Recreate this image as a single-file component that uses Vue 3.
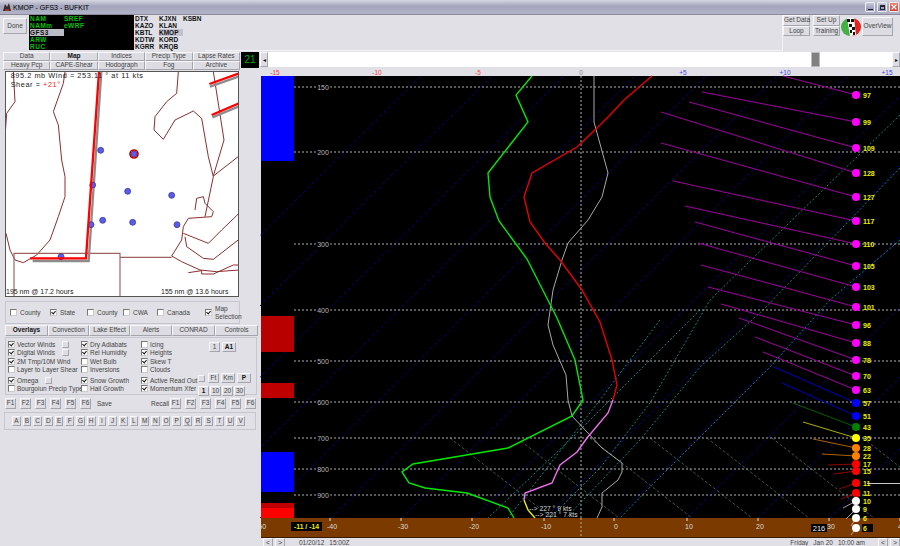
<template>
  <div class="app">
    <header class="titlebar">
      <svg class="app-icon" viewBox="0 0 10 10">
        <path d="M1 9 L3 2 L5 5 L7 1 L9 9 Z" fill="#3a2a2a" />
        <path d="M3 7 h4 v2 h-4 Z" fill="#a03030" />
      </svg>
      <span class="title-text">KMOP - GFS3 - BUFKIT</span>
      <div class="win-btns">
        <span class="win-btn"><i class="win-min"></i></span>
        <span class="win-btn"><i class="win-max"></i></span>
        <span class="win-btn win-close">
          <svg viewBox="0 0 10 10"><path d="M2 2 L8 8 M8 2 L2 8" stroke="#fff" stroke-width="1.6" /></svg>
        </span>
      </div>
    </header>

    <section class="toolbar">
      <button class="btn done">Done</button>
      <div class="models">
        <span v-for="m in models" :key="m" class="model" :class="{ sel: m === 'GFS3' }">{{ m }}</span>
      </div>
      <div class="stations">
        <span v-for="s in stations" :key="s" class="station" :class="{ sel: s === 'KMOP' }">{{ s }}</span>
      </div>
      <div class="panel-fill"></div>
      <div class="tool-right">
        <div class="stack">
          <button class="btn">Get Data</button>
          <button class="btn">Loop</button>
        </div>
        <div class="stack">
          <button class="btn">Set Up</button>
          <button class="btn">Training</button>
        </div>
        <svg class="logo" viewBox="0 0 20 20">
          <path d="M9 1 A9 9 0 0 0 9 19 Z" fill="#44b044" />
          <path d="M11 1 A9 9 0 0 1 11 19 Z" fill="#e82020" />
          <path d="M6 1 L13 1 L15 18 L9 19 Z" fill="#fff" />
          <path d="M6 2 h3 v3 h-3 Z M10 2 h3 v3 h-3 Z M8 7 h3 v3 h-3 Z M11 10 h3 v3 h-3 Z M9 13 h2 v3 h-2 Z M12 15 h2 v3 h-2 Z" fill="#111" />
        </svg>
        <button class="btn overview">OverView</button>
      </div>
    </section>

    <div class="main">
      <aside class="left">
        <div class="tabs-row">
          <div class="tabs-grid">
            <button v-for="t in topTabs" :key="t" class="btn tab" :class="{ bold: t === 'Map' }">{{ t }}</button>
          </div>
          <div class="counter">21</div>
        </div>

        <div class="map">
          <svg viewBox="18 6 696 672" width="232" height="224">
            <g fill="none" stroke="#8b2f2f" stroke-width="3">
              <path v-for="(d, i) in mapLines" :key="i" :d="d" />
            </g>
            <path d="M42 680 V550 H360 V680 M360 562 H515" fill="none" stroke="#a06060" stroke-width="3.5" />
            <g fill="none" stroke="#8c8c8c" stroke-width="7">
              <path d="M304 5 L266 573 H98" />
              <path d="M630 50 L717 19 M637 142 L717 109" />
            </g>
            <g fill="#5c5cec" stroke="#2c2c80" stroke-width="2">
              <circle v-for="(p, i) in mapDots" :key="i" :cx="p[0]" :cy="p[1]" r="9" />
            </g>
            <g fill="none" stroke="#ff0000" stroke-width="7">
              <path d="M297 5 L258 565 H90" />
              <path d="M628 42 L717 10 M635 135 L717 100" />
            </g>
            <circle cx="402" cy="252" r="12" fill="none" stroke="#c00000" stroke-width="5" />
            <g class="map-text">
              <text class="map-head" x="32" y="25">895.2 mb Wind =  253.11 ° at 11  kts</text>
              <text class="map-head" x="32" y="50">Shear = <tspan fill="#ff2020">+21°</tspan></text>
              <text class="map-foot" x="18" y="672">195 nm  @ 17.2 hours</text>
              <text class="map-foot" x="483" y="672">155 nm  @ 13.6 hours</text>
            </g>
          </svg>
        </div>

        <div class="group map-opts">
          <label v-for="o in mapOpts" :key="o.id" class="opt" :style="{ width: o.w + 'px' }">
            <span class="cb" :class="{ on: o.on }"></span>{{ o.label }}
          </label>
          <label class="opt opt-last">
            <span class="cb on"></span>
            <span>Map<br />Selection</span>
          </label>
        </div>

        <div class="sub-tabs">
          <button v-for="t in subTabs" :key="t" class="btn sub-tab" :class="{ bold: t === 'Overlays' }">{{ t }}</button>
        </div>

        <div class="group overlays">
          <div class="ov-grid">
            <div v-for="(col, c) in overlayCols" :key="c" class="ov-col">
              <label v-for="row in col" :key="row.label" class="ov-row" :class="{ gap: row.gap }">
                <span class="cb" :class="{ on: row.on }"></span>{{ row.label }}
                <span v-if="row.btn" class="btn mini"></span>
              </label>
            </div>
          </div>
          <div class="ov-side">
            <div class="side-top">
              <button class="btn sq">1</button>
              <button class="btn sq wide bold">A1</button>
            </div>
            <div class="side-units">
              <span class="btn mini"></span>
              <button class="btn sq">Ft</button>
              <button class="btn sq wide">Km</button>
              <button class="btn sq wide bold">P</button>
            </div>
            <div class="side-steps">
              <button v-for="n in ['1', '10', '20', '30']" :key="n" class="btn sq" :class="{ bold: n === '1' }">{{ n }}</button>
            </div>
          </div>
        </div>

        <div class="f-row">
          <button v-for="n in fKeys" :key="'s' + n" class="btn fkey">F{{ n }}</button>
          <span class="f-save">Save</span>
          <span class="f-recall">Recall</span>
          <button v-for="n in fKeys" :key="'r' + n" class="btn fkey">F{{ n }}</button>
        </div>

        <div class="group letters">
          <button v-for="l in letters" :key="l" class="btn letter">{{ l }}</button>
        </div>
      </aside>

      <main class="right">
        <div class="scroller">
          <button class="btn arrow">◂</button>
          <div class="track"><span class="thumb"></span></div>
          <button class="btn arrow">▸</button>
        </div>

        <svg class="chart" viewBox="260 68 640 470" width="640" height="470">
          <rect x="261" y="76" width="639" height="462" fill="#000" />

          <!-- background lines -->
          <g stroke="#000090" stroke-dasharray="3 3" fill="none">
            <line v-for="x in isotherms" :key="x" :x1="x" y1="518" :x2="x + 446" y2="76" />
          </g>
          <g stroke="#008888" stroke-dasharray="2 2" fill="none">
            <polyline v-for="(l, i) in tealLines" :key="i" :points="l" />
          </g>
          <g stroke="#2f5a50" stroke-dasharray="3 2" fill="none">
            <line v-for="x in dimLines" :key="x" :x1="x" y1="438" :x2="x + 102" y2="518" />
          </g>

          <!-- coloured blocks down the left edge -->
          <rect v-for="b in blocks" :key="b.y" x="261" :y="b.y" width="33" :height="b.h" :fill="b.c" />

          <!-- pressure levels -->
          <g stroke="#b0b0b0" stroke-dasharray="2 2">
            <line v-for="p in levels" :key="p.v" x1="294" :y1="p.y" x2="900" :y2="p.y" />
            <line x1="581" y1="76" x2="581" y2="538" />
          </g>
          <g class="lvl-text">
            <text v-for="p in levels" :key="p.v" x="323" :y="p.y + 3" text-anchor="middle" stroke="#000" stroke-width="3" paint-order="stroke">{{ p.v }}</text>
          </g>

          <!-- top axis -->
          <g class="axis-text">
            <text v-for="a in topAxis" :key="a.t" :x="a.x" y="75" :fill="a.c" text-anchor="middle">{{ a.t }}</text>
          </g>

          <!-- soundings -->
          <polyline :points="greyLine" fill="none" stroke="#a8a8a8" />
          <polyline :points="greenLine" fill="none" stroke="#00e800" stroke-width="1.4" />
          <polyline :points="redLine" fill="none" stroke="#e80000" stroke-width="1.4" />
          <polyline :points="pinkLine" fill="none" stroke="#f070f0" stroke-width="1.4" />
          <polyline points="524,500 528,510 535,518" fill="none" stroke="#f0f000" stroke-width="1.4" />

          <text class="kts" x="529" y="511">--&gt;  227 ° 9 kts</text>
          <text class="kts" x="535" y="517">--&gt;  221 ° 7 kts</text>

          <!-- temperature strip -->
          <rect x="261" y="518" width="639" height="19" fill="#7b3a00" />
          <line x1="261" y1="537.5" x2="900" y2="537.5" stroke="#3a1a00" />
          <line x1="581" y1="518" x2="581" y2="537" stroke="#b0b0b0" stroke-dasharray="2 2" />
          <g stroke="#ddd">
            <line v-for="a in bottomAxis" :key="a.t" :x1="a.x - 2" y1="518" :x2="a.x - 2" y2="521" />
          </g>
          <g class="axis-text bottom">
            <text v-for="a in bottomAxis" :key="a.t" :x="a.x" y="529" text-anchor="middle">{{ a.t }}</text>
          </g>
          <rect x="291" y="522" width="31" height="9" fill="#000" />
          <text class="box-yellow" x="306.5" y="529" text-anchor="middle">-11 / -14</text>
          <rect x="811" y="524" width="16" height="8" fill="#000" />
          <text class="box-white" x="819" y="531" text-anchor="middle">216</text>

          <!-- winds -->
          <line x1="867" y1="483.5" x2="900" y2="483.5" stroke="#c8c8c8" />
          <g v-for="w in winds" :key="w.y">
            <line :x1="w.x" :y1="w.ly" x2="856" :y2="w.y" :stroke="w.line" />
          </g>
          <g v-for="w in winds" :key="'d' + w.y">
            <circle cx="856" :cy="w.y" r="4" :fill="w.dot" />
            <rect v-if="w.y === 528" x="862" y="524" width="11" height="8" fill="#000" />
            <text class="wind-text" x="863" :y="w.y + 3">{{ w.v }}</text>
          </g>
        </svg>

        <footer class="status">
          <button class="btn nav">&lt;</button>
          <button class="btn nav">&gt;</button>
          <span class="stamp">01/20/12</span>
          <span class="stamp">15:00Z</span>
          <span class="when">Friday</span>
          <span class="stamp">Jan 20</span>
          <span class="stamp">10:00 am</span>
          <button class="btn nav end">&lt;</button>
          <button class="btn nav">&gt;</button>
        </footer>
      </main>
    </div>
  </div>
</template>

<script setup>
const models = ['NAM', 'NAMm', 'GFS3', 'ARW', 'RUC', 'SREF', 'eWRF']
const stations = ['DTX', 'KAZO', 'KBTL', 'KDTW', 'KGRR', 'KJXN', 'KLAN', 'KMOP', 'KORD', 'KRQB', 'KSBN']
const topTabs = ['Data', 'Map', 'Indices', 'Precip Type', 'Lapse Rates', 'Heavy Pcp', 'CAPE-Shear', 'Hodograph', 'Fog', 'Archive']
const subTabs = ['Overlays', 'Convection', 'Lake Effect', 'Alerts', 'CONRAD', 'Controls']
const fKeys = [1, 2, 3, 4, 5, 6]
const letters = 'ABCDEFGHIJKLMNOPQRSTUV'.split('')

const mapOpts = [
  { id: 1, label: 'County', w: 40, on: false },
  { id: 2, label: 'State', w: 37, on: true },
  { id: 3, label: 'County', w: 36, on: false },
  { id: 4, label: 'CWA', w: 34, on: false },
  { id: 5, label: 'Canada', w: 48, on: false }
]

const overlayCols = [
  [
    { label: 'Vector Winds', on: true, btn: true },
    { label: 'Digital Winds', on: true, btn: true },
    { label: '2M Tmp/10M Wnd', on: true },
    { label: 'Layer to Layer Shear', on: false },
    { label: 'Omega', on: true, btn: true, gap: true },
    { label: 'Bourgoiun Precip Type', on: false }
  ],
  [
    { label: 'Dry Adiabats', on: true },
    { label: 'Rel Humidity', on: true },
    { label: 'Wet Bulb', on: false },
    { label: 'Inversions', on: false },
    { label: 'Snow Growth', on: true, gap: true },
    { label: 'Hail Growth', on: false }
  ],
  [
    { label: 'Icing', on: false },
    { label: 'Heights', on: true },
    { label: 'Skew T', on: true },
    { label: 'Clouds', on: false },
    { label: 'Active Read Out', on: true, gap: true },
    { label: 'Momentum Xfer', on: true }
  ]
]

const mapLines = [
  'M195 5 L190 40 L160 125 L175 165 L185 270 L195 320 L195 380 L175 440 L150 510 L110 555 L70 578 L45 570 L30 540 L18 490',
  'M40 5 L45 95 L20 130 L15 200',
  'M535 5 L530 70 L500 95 L465 140 L462 180 L490 208 L525 150 L580 123 L605 145 L625 260 L640 320 L615 440',
  'M585 420 L590 385 L610 380 L615 400 L640 425 L635 440 L565 445 L550 470 L545 510 L515 558',
  'M640 5 L672 210 L640 318 L717 258',
  'M550 490 L625 520 L665 480 L717 430',
  'M555 500 L560 530 L610 565 L640 568 L717 508',
  'M515 558 L545 575 L600 600 L650 605 L717 600',
  'M565 608 L605 602 L605 612 L640 612 L700 585 L717 585',
  'M717 130 V155'
]
const mapDots = [[302, 241], [402, 252], [278, 345], [383, 364], [515, 376], [308, 451], [273, 464], [398, 457], [531, 464], [183, 560]]

const blocks = [
  { y: 76, h: 85, c: '#0000ff' },
  { y: 316, h: 36, c: '#b80000' },
  { y: 383, h: 15, c: '#c00000' },
  { y: 452, h: 40, c: '#0000ff' },
  { y: 503, h: 5, c: '#c00000' },
  { y: 508, h: 10, c: '#ff0000' }
]

const levels = [
  { v: 150, y: 87 }, { v: 200, y: 152 }, { v: 300, y: 244 }, { v: 400, y: 310 },
  { v: 500, y: 361 }, { v: 600, y: 402 }, { v: 700, y: 438 }, { v: 800, y: 469 }, { v: 900, y: 495 }
]

const isotherms = []
for (let k = -9; k <= 4; k++) isotherms.push(Math.round(616 + 71.2 * k))

const tealLines = [
  '900,115 710,300 650,403 600,468 550,518',
  '900,168 763,310 700,367 640,440 566,518',
  '900,240 830,300 770,367 652,485 620,518',
  '700,310 650,360 577,433 488,518',
  '660,320 600,400 508,518'
]
const dimLines = [450, 517, 590, 650, 707, 772, 863]

const topAxis = [
  { t: '-15', x: 275, c: '#f04040' }, { t: '-10', x: 377, c: '#f04040' }, { t: '-5', x: 478, c: '#f04040' },
  { t: '0', x: 581, c: '#888' }, { t: '+5', x: 683, c: '#4040f0' }, { t: '+10', x: 785, c: '#4040f0' }, { t: '+15', x: 887, c: '#4040f0' }
]
const bottomAxis = [
  { t: '-50', x: 261 }, { t: '-40', x: 332 }, { t: '-30', x: 403 }, { t: '-20', x: 474 }, { t: '-10', x: 546 },
  { t: '0', x: 616 }, { t: '10', x: 689 }, { t: '20', x: 760 }, { t: '30', x: 831 }, { t: '40', x: 902 }
]

const greenLine = '532,76 516,95 528,122 488,173 490,197 499,221 527,259 557,318 575,360 583,400 572,416 508,448 413,464 402,472 409,483 425,488 467,493 508,508 514,518'
const redLine = '652,76 624,100 610,115 597,128 577,147 532,173 524,197 530,222 545,243 560,260 582,290 600,322 612,360 617,385 613,400'
const pinkLine = '613,400 608,413 587,438 577,452 560,465 552,483 525,493 524,500'
const greyLine = '594,76 594,122 608,173 602,197 588,220 568,243 562,260 553,290 548,325 553,345 566,375 568,400 572,416 602,448 622,463 622,472 618,480 602,493 602,507 597,518'

const magenta = { dot: '#ff00ff', line: '#a000a0' }
const winds = [
  { v: 97, y: 95, x: 783, ly: 76, ...magenta },
  { v: 99, y: 122, x: 702, ly: 92, ...magenta },
  { v: 109, y: 148, x: 689, ly: 102, ...magenta },
  { v: 128, y: 173, x: 661, ly: 112, ...magenta },
  { v: 127, y: 197, x: 661, ly: 143, ...magenta },
  { v: 117, y: 221, x: 673, ly: 181, ...magenta },
  { v: 110, y: 244, x: 685, ly: 206, ...magenta },
  { v: 105, y: 266, x: 695, ly: 222, ...magenta },
  { v: 103, y: 287, x: 698, ly: 243, ...magenta },
  { v: 101, y: 307, x: 701, ly: 265, ...magenta },
  { v: 96, y: 325, x: 708, ly: 287, ...magenta },
  { v: 88, y: 343, x: 721, ly: 304, ...magenta },
  { v: 78, y: 360, x: 739, ly: 318, ...magenta },
  { v: 70, y: 376, x: 755, ly: 337, ...magenta },
  { v: 63, y: 390, x: 763, ly: 352, ...magenta },
  { v: 57, y: 403, x: 774, ly: 367, dot: '#0000ff', line: '#0000c0' },
  { v: 51, y: 416, x: 782, ly: 383, dot: '#0000ff', line: '#0000c0' },
  { v: 43, y: 427, x: 793, ly: 403, dot: '#008000', line: '#006000' },
  { v: 35, y: 438, x: 803, ly: 422, dot: '#ffff00', line: '#b0b000' },
  { v: 28, y: 448, x: 813, ly: 439, dot: '#ff8000', line: '#b06000' },
  { v: 22, y: 456, x: 822, ly: 454, dot: '#ff8000', line: '#b06000' },
  { v: 17, y: 464, x: 828, ly: 465, dot: '#ff0000', line: '#900000' },
  { v: 15, y: 471, x: 833, ly: 474, dot: '#ff0000', line: '#900000' },
  { v: 11, y: 483, x: 839, ly: 489, dot: '#ff0000', line: '#900000' },
  { v: 11, y: 493, x: 841, ly: 499, dot: '#ff0000', line: '#900000' },
  { v: 10, y: 501, x: 843, ly: 508, dot: '#ffffff', line: '#a0a0a0' },
  { v: 9, y: 509, x: 846, ly: 519, dot: '#ffffff', line: '#a0a0a0' },
  { v: 6, y: 518, x: 851, ly: 526, dot: '#ffffff', line: '#c0a090' },
  { v: 6, y: 528, x: 851, ly: 535, dot: '#ffffff', line: '#c0a090' }
]
</script>

<style>
body {
  margin: 0;
  background: #e0e0e6;
}
</style>

<style scoped>
.app {
  width: 900px;
  height: 546px;
  overflow: hidden;
  background: #e0e0e6;
  color: #444;
  font-family: "Liberation Sans", Arial, sans-serif;
  font-size: 6.5px;
}

button {
  font-family: inherit;
  color: inherit;
  padding: 0;
}

.btn {
  display: block;
  background: #dcdce2;
  border: 1px solid #a4a4ac;
  border-top-color: #f8f8fa;
  border-left-color: #f8f8fa;
  font-size: 6.5px;
  line-height: 1;
  box-sizing: border-box;
  white-space: nowrap;
}

.bold {
  font-weight: 700;
  color: #111;
}

.titlebar {
  height: 15px;
  display: flex;
  align-items: center;
  padding-left: 2px;
  box-sizing: border-box;
  background: linear-gradient(#d6d6e2, #a4a4bc 45%, #b2b2c8);
  border-bottom: 1px solid #8a8a98;
}

.app-icon {
  width: 10px;
  height: 10px;
  margin-right: 1px;
}

.title-text {
  color: #000;
  font-size: 7px;
}

.win-btns {
  margin-left: auto;
  display: flex;
  gap: 2px;
  margin-right: 1px;
}

.win-btn {
  width: 10px;
  height: 10px;
  border-radius: 1px;
  background: linear-gradient(#c8c8dc, #8c8cae);
  border: 1px solid #eee;
  box-sizing: border-box;
  display: flex;
  align-items: center;
  justify-content: center;
}

.win-min {
  width: 5px;
  height: 1px;
  background: #223;
  margin-top: 4px;
}

.win-max {
  width: 5px;
  height: 5px;
  border: 1px solid #223;
  border-top-width: 2px;
  box-sizing: border-box;
}

.win-close {
  background: linear-gradient(#e88070, #d04030);
}

.win-close svg {
  width: 100%;
  height: 100%;
}

.toolbar {
  height: 37px;
  display: flex;
  align-items: flex-start;
  padding-left: 3px;
  box-sizing: border-box;
}

.done {
  width: 24px;
  height: 16px;
  margin-top: 3px;
  margin-right: 2px;
}

.models {
  width: 105px;
  height: 35px;
  background: #000;
  display: grid;
  grid-auto-flow: column;
  grid-template-rows: repeat(5, 7px);
  grid-template-columns: 34px 1fr;
  padding-left: 1px;
  box-sizing: border-box;
  font-weight: 700;
  color: #00c000;
  line-height: 7px;
  letter-spacing: 0.5px;
}

.model.sel {
  background: #bcbcc6;
  color: #111;
}

.stations {
  margin-left: 1px;
  width: 70px;
  height: 35px;
  flex: none;
  display: grid;
  grid-auto-flow: column;
  grid-template-rows: repeat(5, 7px);
  grid-template-columns: 24px 24px 22px;
  color: #111;
  font-weight: 700;
  line-height: 7px;
}

.station.sel {
  background: #c2c2ce;
}

.panel-fill {
  flex: 1;
  height: 36px;
  border-right: 1px solid #f4f4f8;
  border-bottom: 1px solid #f4f4f8;
  box-sizing: border-box;
}

.tool-right {
  display: flex;
  align-items: flex-start;
  padding-right: 7px;
}

.stack {
  width: 27px;
  margin-right: 3px;
}

.stack .btn {
  width: 100%;
  height: 10.5px;
}

.logo {
  width: 20px;
  height: 20px;
  margin: 2px 1px 0 -2px;
}

.overview {
  width: 31px;
  height: 19px;
  margin-top: 2px;
}

.main {
  display: flex;
  height: 494px;
}

.left {
  width: 260px;
  flex: none;
  padding-left: 3px;
  box-sizing: border-box;
}

.tabs-row {
  display: flex;
  gap: 1px;
}

.tabs-grid {
  width: 237px;
  display: grid;
  grid-template-columns: repeat(5, 1fr);
  grid-auto-rows: 9px;
}

.tab {
  width: 100%;
  height: 100%;
}

.counter {
  width: 18px;
  height: 16px;
  background: #000;
  color: #00b000;
  font-size: 10px;
  line-height: 16px;
  text-align: center;
}

.map {
  margin: 1px 0 0 2px;
  width: 234px;
  height: 226px;
  background: #fff;
  border: 1px solid #555;
  box-sizing: border-box;
  overflow: hidden;
}

.map svg {
  display: block;
}

.map-text {
  fill: #222;
  white-space: pre;
}

.map-head {
  font-size: 22px;
  letter-spacing: 1.7px;
}

.map-foot {
  font-size: 21px;
}

.group {
  border: 1px solid #c6c6ce;
  box-sizing: border-box;
}

.map-opts {
  margin: 4px 0 0 2px;
  width: 235px;
  height: 23px;
  display: flex;
  align-items: center;
  padding-left: 4px;
}

.opt {
  display: flex;
  align-items: center;
  gap: 3px;
  flex: none;
}

.opt-last {
  line-height: 7.5px;
}

.cb {
  width: 7px;
  height: 7px;
  flex: none;
  background: #fff;
  border: 1px solid #777;
  border-right-color: #ccc;
  border-bottom-color: #ccc;
  box-sizing: border-box;
  position: relative;
}

.cb.on::after {
  content: "";
  position: absolute;
  left: 1px;
  top: 0;
  width: 2px;
  height: 3px;
  border: solid #111;
  border-width: 0 1px 1px 0;
  transform: rotate(40deg);
}

.sub-tabs {
  display: grid;
  grid-template-columns: 43px 41px 41px 42px 43px 43px;
  margin: 1px 0 0 2px;
  height: 11px;
}

.sub-tab {
  height: 100%;
  width: 100%;
}

.overlays {
  margin: 1px 0 0 2px;
  width: 252px;
  height: 58px;
  display: flex;
  padding: 2px 0 0 2px;
}

.ov-grid {
  width: 190px;
  display: grid;
  grid-template-columns: 73px 60px 57px;
  flex: none;
}

.ov-row {
  height: 8.5px;
  display: flex;
  align-items: center;
  gap: 2px;
  white-space: nowrap;
}

.ov-row.gap {
  margin-top: 2px;
}

.mini {
  display: inline-block;
  width: 7px;
  height: 7px;
  flex: none;
  margin-left: 5px;
}

.ov-side {
  display: flex;
  flex-direction: column;
  flex: none;
}

.side-top {
  display: flex;
  gap: 2px;
  margin: 2px 0 0 11px;
}

.side-units {
  display: flex;
  align-items: center;
  gap: 2px;
  margin-top: 21px;
}

.side-units .mini {
  margin-left: 0;
  margin-right: 1px;
}

.side-steps {
  display: flex;
  gap: 1px;
  margin-top: 3px;
}

.sq {
  width: 11px;
  height: 10px;
  flex: none;
}

.sq.wide {
  width: 14px;
}

.f-row {
  margin: 3px 0 0 2px;
  display: flex;
  gap: 4px;
}

.fkey {
  width: 11px;
  height: 11px;
  flex: none;
}

.f-save {
  margin: 2px 0 0 2px;
  width: 28px;
}

.f-recall {
  margin: 2px 0 0 22px;
  width: 15px;
}

.letters {
  margin: 3px 0 0 1px;
  width: 252px;
  height: 18px;
  display: flex;
  align-items: center;
  padding-left: 7px;
  gap: 2px;
}

.letter {
  width: 8.7px;
  height: 10px;
  flex: none;
}

.right {
  width: 640px;
  flex: none;
  display: flex;
  flex-direction: column;
}

.scroller {
  height: 16px;
  display: flex;
  flex: none;
}

.arrow {
  width: 8px;
  height: 15px;
  font-size: 6px;
  color: #111;
}

.track {
  flex: 1;
  height: 15px;
  background: #fff;
  position: relative;
}

.thumb {
  position: absolute;
  left: 543px;
  top: 0;
  width: 9px;
  height: 15px;
  background: #808080;
  border: 1px solid #bbb;
  box-sizing: border-box;
}

.chart {
  display: block;
  flex: none;
}

.lvl-text {
  font-size: 7px;
  fill: #b8b8b8;
}

.axis-text {
  font-size: 6.5px;
}

.axis-text.bottom {
  font-size: 7px;
  fill: #ddd;
}

.kts {
  font-size: 6.8px;
  fill: #d8d8d8;
  white-space: pre;
}

.box-yellow {
  font-size: 6.8px;
  font-weight: 700;
  fill: #f0f000;
}

.box-white {
  font-size: 7.5px;
  fill: #eee;
}

.wind-text {
  font-size: 7px;
  font-weight: 700;
  fill: #f0f000;
}

.status {
  height: 8px;
  display: flex;
  align-items: center;
  padding-left: 3px;
  gap: 2px;
  overflow: hidden;
}

.nav {
  width: 10px;
  height: 9px;
  font-size: 7px;
  flex: none;
}

.stamp {
  margin-left: 3px;
  white-space: nowrap;
}

.stamp:first-of-type {
  margin-left: 12px;
}

.when {
  margin-left: auto;
}

.nav.end {
  margin-left: 11px;
}
</style>
